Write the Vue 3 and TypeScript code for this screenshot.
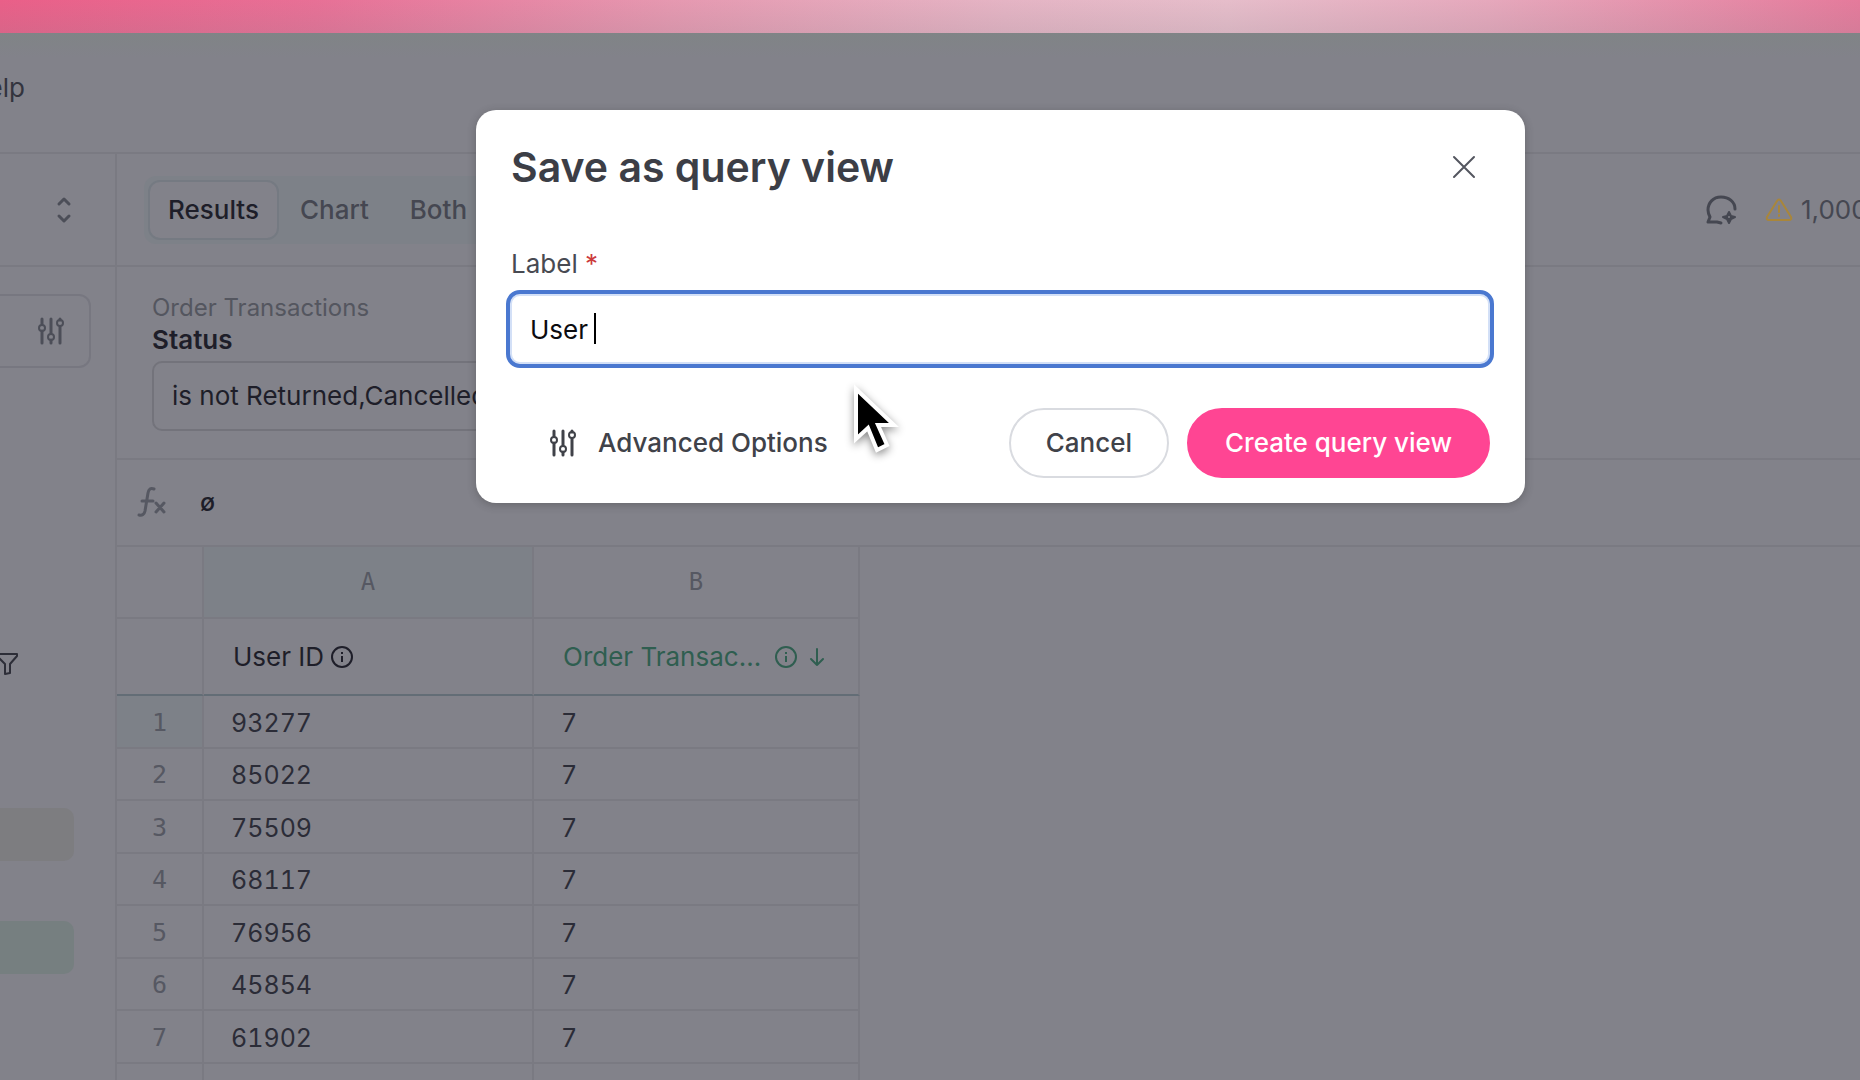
<script setup lang="ts">
import { ref } from 'vue'

interface Row {
  id: string
  orders: string
}

const label = ref('User ')
const activeTab = ref('Results')
const tabs = ['Results', 'Chart', 'Both']
const rows: Row[] = [
  { id: '93277', orders: '7' },
  { id: '85022', orders: '7' },
  { id: '75509', orders: '7' },
  { id: '68117', orders: '7' },
  { id: '76956', orders: '7' },
  { id: '45854', orders: '7' },
  { id: '61902', orders: '7' },
]
</script>

<template>
  <div class="page">
    <div class="wallpaper"></div>
    <div class="app">
      <header class="menubar">
        <nav class="menu"><button type="button" class="menu-item">Help</button></nav>
      </header>

      <div class="body">
        <aside class="sidebar">
          <div class="picker">
            <svg width="16" height="28" viewBox="0 0 16 28" fill="none" stroke="#4c4e58" stroke-width="3" stroke-linecap="round" stroke-linejoin="round"><path d="M3 8l5-5 5 5M3 20l5 5 5-5" /></svg>
          </div>
          <div class="search">
            <svg class="sliders" width="28" height="28" viewBox="0 0 28 28" fill="none" stroke="#4c4e58" stroke-width="3" stroke-linecap="round"><path d="M5 2v5M5 14v12M14 2v14M14 23v3M23 2v1M23 10v16" /><circle cx="5" cy="11" r="3" stroke-width="2" /><circle cx="14" cy="20" r="3" stroke-width="2" /><circle cx="23" cy="6" r="3" stroke-width="2" /></svg>
          </div>
          <div class="funnel">
            <svg width="24" height="24" viewBox="0 0 24 24" fill="none" stroke="#2d2e38" stroke-width="2" stroke-linejoin="round"><path d="M2 2h20v2l-7 8v9l-5 1V12L2 4z" /></svg>
          </div>
          <div class="pill"></div>
          <div class="pill pill-green"></div>
        </aside>

        <main class="main">
          <div class="toolbar">
            <div class="tabs">
              <button v-for="tab in tabs" :key="tab" type="button" class="tab" :class="{ active: tab === activeTab }" @click="activeTab = tab">{{ tab }}</button>
            </div>
            <div class="status">
              <svg width="32" height="32" viewBox="0 0 32 32" fill="none" stroke="#454751" stroke-width="3" stroke-linecap="round" stroke-linejoin="round"><path d="M30 15C30 8 24 3 16 3S3 9 3 16c0 3 1 5 2 7l-2 5h9l4 1" /><path d="M24 18l2 4 4 1-4 2-2 4-2-4-4-2 4-1z" fill="#454751" stroke-width="2" /><circle cx="24" cy="23" r="1" fill="#82828a" stroke="none" /></svg>
              <svg class="warn" width="28" height="24" viewBox="0 0 28 24" fill="none" stroke="#a9863a" stroke-width="2" stroke-linecap="round" stroke-linejoin="round"><path d="M12 3Q14 0 16 3L26 19Q27 22 24 22H4Q1 22 2 19z" /><path d="M14 8v6M14 17v1" /></svg>
              <span>1,000</span>
            </div>
          </div>

          <section class="filters">
            <div class="dataset">Order Transactions</div>
            <div class="field">Status</div>
            <button type="button" class="condition">is not Returned,Cancelled</button>
          </section>

          <div class="formula">
            <svg width="32" height="32" viewBox="0 0 32 32" fill="none" stroke="#565862" stroke-width="3" stroke-linecap="round"><path d="M18 3q-5-2-6 4L9 25q-1 5-6 4M6 15h11" /><path d="M20 17l8 9M28 17l-8 9" /></svg>
            <span class="empty">ø</span>
          </div>

          <table class="grid">
            <colgroup><col class="c-num" /><col class="c-a" /><col class="c-b" /></colgroup>
            <thead>
              <tr class="letters"><th></th><th class="hot">A</th><th>B</th></tr>
              <tr class="names">
                <th></th>
                <th>
                  <div class="name">User ID
                    <svg class="info" width="24" height="24" viewBox="0 0 24 24" fill="none" stroke="currentColor" stroke-width="2"><circle cx="12" cy="12" r="10" /><path d="M12 11v6M12 7v2" /></svg>
                  </div>
                </th>
                <th>
                  <div class="name measure">Order Transac...
                    <svg class="info gap" width="24" height="24" viewBox="0 0 24 24" fill="none" stroke="currentColor" stroke-width="2"><circle cx="12" cy="12" r="10" /><path d="M12 11v6M12 7v2" /></svg>
                    <svg class="sort" width="16" height="20" viewBox="0 0 16 20" fill="none" stroke="currentColor" stroke-width="2" stroke-linecap="round" stroke-linejoin="round"><path d="M8 2v16M2 12l6 6 6-6" /></svg>
                  </div>
                </th>
              </tr>
            </thead>
            <tbody>
              <tr v-for="(row, i) in rows" :key="row.id">
                <td class="num" :class="{ hot: i === 0 }">{{ i + 1 }}</td>
                <td>{{ row.id }}</td>
                <td>{{ row.orders }}</td>
              </tr>
              <tr><td></td><td></td><td></td></tr>
            </tbody>
          </table>
        </main>
      </div>
    </div>

    <div class="layer">
      <form class="modal" role="dialog" aria-labelledby="dialog-title" @submit.prevent>
        <div class="modal-head">
          <h2 id="dialog-title">Save as query view</h2>
          <button type="button" class="close" aria-label="Close">
            <svg width="26" height="26" viewBox="0 0 26 26" fill="none" stroke="#53565f" stroke-width="2" stroke-linecap="round"><path d="M3 3l20 20M23 3L3 23" /></svg>
          </button>
        </div>
        <label class="label" for="view-label">Label <span class="required">*</span></label>
        <div class="input-wrap">
          <input id="view-label" v-model="label" type="text" class="input" />
          <span class="caret"></span>
        </div>
        <div class="modal-foot">
          <button type="button" class="advanced">
            <svg width="28" height="28" viewBox="0 0 28 28" fill="none" stroke="#404249" stroke-width="3" stroke-linecap="round"><path d="M5 2v5M5 14v12M14 2v14M14 23v3M23 2v1M23 10v16" /><circle cx="5" cy="11" r="3" stroke-width="2" /><circle cx="14" cy="20" r="3" stroke-width="2" /><circle cx="23" cy="6" r="3" stroke-width="2" /></svg>
            Advanced Options
          </button>
          <button type="button" class="btn">Cancel</button>
          <button type="submit" class="btn primary">Create query view</button>
        </div>
      </form>
    </div>

    <svg class="pointer" width="56" height="80" viewBox="0 0 56 80"><path d="M6 8v50l12-11 9 22 10-5-9-20h16z" fill="#000" stroke="#fff" stroke-width="4" /></svg>
  </div>
</template>

<style>
body {
  margin: 0;
}
</style>

<style scoped>
* {
  box-sizing: border-box;
}
.page {
  position: relative;
  display: flex;
  flex-direction: column;
  height: 100vh;
  overflow: hidden;
  font-family: Inter, "Liberation Sans", sans-serif;
  font-size: 26px;
  line-height: 32px;
  color: #1e1e29;
  background: #82828a;
}
button {
  font: inherit;
  color: inherit;
  border: 0;
  padding: 0;
  background: none;
}
svg {
  flex: none;
  display: block;
}
.wallpaper {
  flex: none;
  height: 33px;
  background: linear-gradient(180deg, transparent, rgba(130, 130, 138, 0.16)), linear-gradient(90deg, #ea5f88 0%, #e87096 17%, #e698b0 36%, #e5b4c4 54%, #e6bdca 66%, #e6a8bc 80%, #e57a9b 100%);
}
.app {
  flex: 1;
  min-height: 0;
  display: flex;
  flex-direction: column;
  background: linear-gradient(180deg, #808486 0, #82828a 24px);
}
.menubar {
  flex: none;
  display: flex;
  align-items: center;
  height: 121px;
  padding-bottom: 9px;
  border-bottom: 2px solid #7a7a82;
}
.menu {
  display: flex;
  justify-content: flex-end;
  width: 25px;
  color: #33343e;
}
.body {
  flex: 1;
  min-height: 0;
  display: flex;
}
.sidebar {
  flex: none;
  width: 117px;
  border-right: 2px solid #7a7a82;
}
.picker {
  display: flex;
  align-items: center;
  justify-content: flex-end;
  height: 113px;
  padding-right: 43px;
  border-bottom: 2px solid #7a7a82;
}
.search {
  display: flex;
  align-items: center;
  justify-content: flex-end;
  width: 91px;
  height: 74px;
  margin-top: 27px;
  padding-right: 24px;
  border: 2px solid #777780;
  border-left: 0;
  border-radius: 0 12px 12px 0;
}
.funnel {
  display: flex;
  justify-content: flex-end;
  width: 19px;
  height: 24px;
  margin-top: 284px;
}
.pill {
  width: 74px;
  height: 53px;
  margin-top: 132px;
  border-radius: 0 10px 10px 0;
  background: #7d7d80;
}
.pill-green {
  margin-top: 60px;
  background: #767f80;
}
.main {
  flex: 1;
  min-width: 0;
}
.toolbar {
  display: flex;
  align-items: center;
  justify-content: space-between;
  height: 113px;
  padding-left: 27px;
  border-bottom: 2px solid #7a7a82;
}
.tabs {
  display: flex;
  gap: 1px;
  padding: 4px;
  border-radius: 12px;
  background: #7d8188;
  font-weight: 500;
  color: #454751;
}
.tab {
  height: 60px;
  padding: 0 18px;
  border: 2px solid transparent;
  border-radius: 12px;
}
.tab.active {
  color: #1e1e29;
  border-color: #757a82;
  background: #82828a;
}
.status {
  display: flex;
  align-items: center;
  width: 155px;
  white-space: nowrap;
  color: #454751;
}
.warn {
  margin: 0 8px 0 28px;
}
.filters {
  height: 193px;
  padding: 25px 0 0 35px;
  border-bottom: 2px solid #7a7a82;
  overflow: hidden;
}
.dataset {
  font-size: 24px;
  color: #54565f;
}
.field {
  font-weight: 600;
}
.condition {
  display: block;
  height: 70px;
  margin-top: 5px;
  padding: 0 18px;
  border: 2px solid #73737b;
  border-radius: 10px;
}
.formula {
  display: flex;
  align-items: center;
  gap: 32px;
  height: 87px;
  padding: 0 0 2px 19px;
  border-bottom: 2px solid #7a7a82;
}
.empty {
  font-size: 25px;
  font-weight: 500;
}
.grid {
  width: 743px;
  table-layout: fixed;
  border-collapse: separate;
  border-spacing: 0;
}
.c-num {
  width: 87px;
}
.c-a {
  width: 330px;
}
.c-b {
  width: 326px;
}
th,
td {
  padding: 0;
  border-right: 2px solid #7a7a82;
  border-bottom: 2px solid #7a7a82;
  font-weight: 400;
  text-align: left;
}
.letters th {
  height: 72px;
  text-align: center;
  font-family: "DejaVu Sans Mono", monospace;
  font-size: 24px;
  color: #565862;
}
.names th {
  height: 77px;
  padding-left: 29px;
  border-bottom-color: #636d76;
}
.letters .hot,
.num.hot {
  background: #7d8188;
}
.name {
  display: flex;
  align-items: center;
  white-space: nowrap;
}
.measure {
  color: #2f5e50;
}
.info {
  margin-left: 6px;
}
.info.gap {
  margin-left: 13px;
}
.sort {
  margin-left: 11px;
}
td {
  height: 53px;
  padding: 2px 0 0 27px;
  color: #2b2c37;
  font-size: 25px;
  font-feature-settings: "tnum";
}
tr:nth-child(even) td {
  height: 52px;
}
td.num {
  padding: 2px 0 0;
  text-align: center;
  font-family: "DejaVu Sans Mono", monospace;
  color: #565862;
}
.layer {
  position: absolute;
  inset: 0;
  display: flex;
  align-items: flex-start;
  justify-content: center;
  padding: 110px 0 0 141px;
}
.modal {
  width: 1049px;
  padding: 30px 31px 25px 30px;
  border-radius: 20px;
  background: #fff;
  box-shadow: 0 2px 8px rgba(40, 40, 40, 0.3);
}
.modal-head {
  display: flex;
  align-items: center;
  justify-content: space-between;
  padding: 0 17px 0 5px;
}
h2 {
  margin: 0;
  font-size: 41px;
  line-height: 54px;
  font-weight: 600;
  color: #3c3e46;
}
.label {
  display: block;
  margin: 54px 0 10px;
  padding-left: 5px;
  color: #484a52;
}
.required {
  color: #cc3b3b;
}
.input-wrap {
  position: relative;
}
.input {
  display: block;
  width: 100%;
  height: 78px;
  padding: 0 20px;
  border: 4px solid #4a78d0;
  border-radius: 14px;
  outline: 0;
  box-shadow: inset 0 0 0 2px #d3e0f7;
  font: inherit;
  color: #0c0c10;
  caret-color: transparent;
}
.caret {
  position: absolute;
  left: 88px;
  top: 23px;
  width: 2px;
  height: 31px;
  background: #000;
}
.modal-foot {
  display: flex;
  align-items: center;
  gap: 18px;
  margin-top: 40px;
  padding-right: 4px;
  font-weight: 500;
  color: #404249;
}
.advanced {
  display: flex;
  align-items: center;
  gap: 21px;
  margin-right: auto;
  padding-left: 43px;
}
.btn {
  height: 70px;
  padding: 0 35px;
  border: 2px solid #d9dbe0;
  border-radius: 35px;
}
.primary {
  padding: 0 36px;
  border-color: #ff4593;
  background: #ff4593;
  color: #fff;
}
.pointer {
  position: absolute;
  left: 850px;
  top: 381px;
  filter: drop-shadow(0 3px 4px rgba(0, 0, 0, 0.45));
}
</style>
